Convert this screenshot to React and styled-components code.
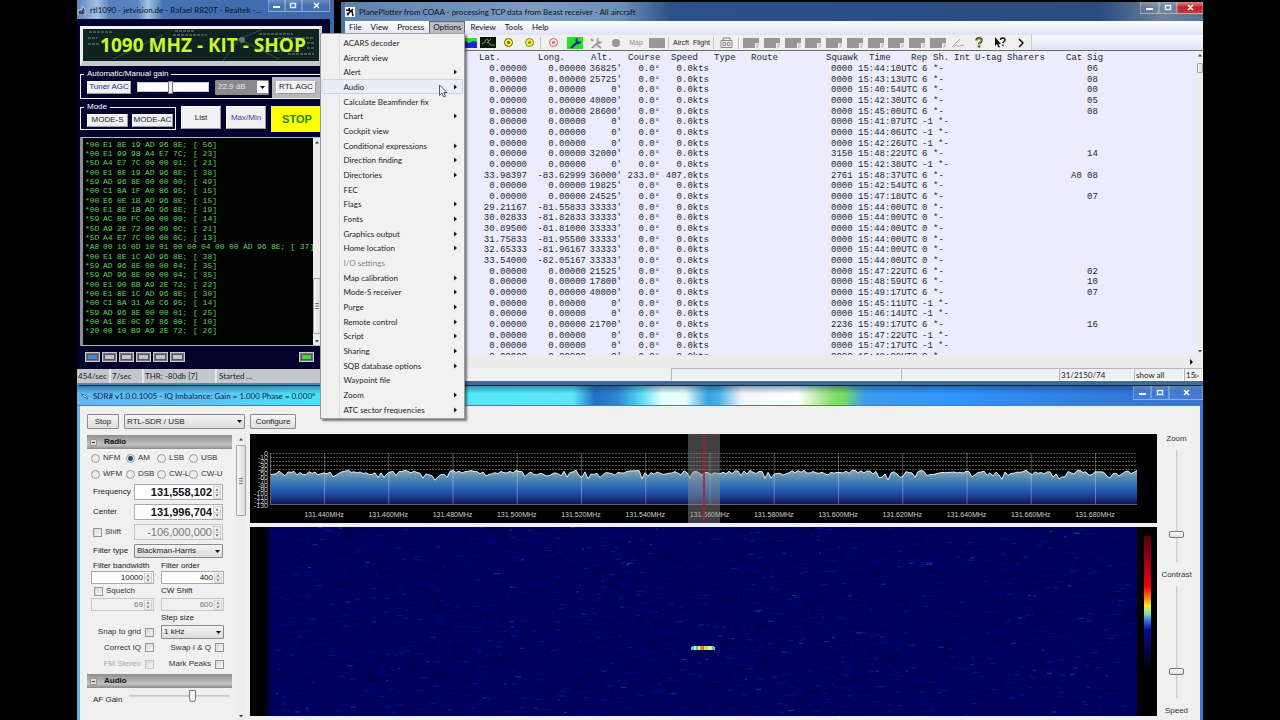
import * as React from "react"
import styled, { createGlobalStyle, css } from "styled-components";

const GlobalStyle = createGlobalStyle`
  * { box-sizing: border-box; }
  body { margin: 0; background: #000; }
  button, input, select { font: inherit; color: inherit; margin: 0; }
  ul { list-style: none; margin: 0; padding: 0; }
`
const ui = `"Lato", "Open Sans", sans-serif`
const sans = `"Liberation Sans", Arial, sans-serif`
const mono = `"Liberation Mono", "Courier New", monospace`

/* ---------- data ---------- */

const packets = [
  "00 E1 8E 19 AD 96 8E;56", "00 E1 99 98 A4 E7 7C;23", "5D A4 E7 7C 00 00 01;21",
  "00 E1 8E 19 AD 96 8E;38", "59 AD 96 8E 00 00 00;49", "00 C1 8A 1F A0 86 95;15",
  "00 E6 0E 1B AD 96 8E;15", "00 E1 8E 1B AD 96 8E;19", "59 AC B0 FC 00 00 00;14",
  "5D A9 2E 72 00 00 0C;21", "5D A4 E7 7C 00 00 0C;13",
  "A8 00 16 0D 10 01 00 00 04 00 00 AD 96 8E;37", "00 E1 8E 1C AD 96 8E;38",
  "59 AD 96 8E 00 00 04;35", "59 AD 96 8E 00 00 04;35", "00 E1 90 BB A9 2E 72;22",
  "00 E1 8E 1C AD 96 8E;30", "00 C1 8A 31 A0 C6 95;14", "59 AD 96 8E 00 00 01;25",
  "00 A1 8E 0C 67 86 00;10", "20 00 10 B9 A9 2E 72;26",
]

const zero = "0.00000"
const row = (alt, time, rep, sig = "", more = {}) => ({
  lat: zero, long: zero, alt, course: "0.0", speed: "0.0", squawk: "0000", cat: "", time, rep, sig, ...more,
})
const aircraft = [
  row("36825", "15:44:10", "6", "06"),
  row("25725", "15:43:13", "6", "08"),
  row("0", "15:40:54", "6", "00"),
  row("40000", "15:42:30", "6", "05"),
  row("28600", "15:45:00", "6", "08"),
  row("0", "15:41:07", "-1"),
  row("0", "15:44:06", "-1"),
  row("0", "15:42:26", "-1"),
  row("32000", "15:48:22", "6", "14", { squawk: "3150" }),
  row("0", "15:42:38", "-1"),
  row("36000", "15:48:37", "6", "08", { lat: "33.98397", long: "-83.62999", course: "233.0", speed: "407.0", squawk: "2761", cat: "A0" }),
  row("19825", "15:42:54", "6"),
  row("24525", "15:47:18", "6", "07"),
  row("33333", "15:44:00", "0", "", { lat: "29.21167", long: "-81.55833" }),
  row("33333", "15:44:00", "0", "", { lat: "30.02833", long: "-81.82833" }),
  row("33333", "15:44:00", "0", "", { lat: "30.89500", long: "-81.81000" }),
  row("33333", "15:44:00", "0", "", { lat: "31.75833", long: "-81.95500" }),
  row("33333", "15:44:00", "0", "", { lat: "32.65333", long: "-81.96167" }),
  row("33333", "15:44:00", "0", "", { lat: "33.54000", long: "-82.05167" }),
  row("21525", "15:47:22", "6", "02"),
  row("17800", "15:48:59", "6", "10"),
  row("40000", "15:49:17", "6", "07"),
  row("0", "15:45:11", "-1"),
  row("0", "15:46:14", "-1"),
  row("21700", "15:49:17", "6", "16", { squawk: "2236" }),
  row("0", "15:47:22", "-1"),
  row("0", "15:47:17", "-1"),
  row("0", "15:48:08", "0"),
]

const menuItems = [
  ["ACARS decoder"], ["Aircraft view"], ["Alert", 1], ["Audio", 1], ["Calculate Beamfinder fix"],
  ["Chart", 1], ["Cockpit view"], ["Conditional expressions", 1], ["Direction finding", 1],
  ["Directories", 1], ["FEC"], ["Flags", 1], ["Fonts", 1], ["Graphics output", 1],
  ["Home location", 1], ["I/O settings"], ["Map calibration", 1], ["Mode-S receiver", 1],
  ["Purge", 1], ["Remote control", 1], ["Script", 1], ["Sharing", 1],
  ["SQB database options", 1], ["Waypoint file"], ["Zoom", 1], ["ATC sector frequencies", 1],
]

/* ---------- shell ---------- */

const Desktop = styled.main`
  min-height: 100vh;
  margin: 0 77px;
  display: grid;
  grid-template-rows: auto 1fr;
  font: 8px/10px ${ui};
  color: #222;
  background: #000;
`
const TopRow = styled.div`
  display: grid;
  grid-template-columns: 257px 1fr;
  gap: 7px;
  position: relative;
  z-index: 1;
`
const Spacer = styled.span`
  flex: 1;
`
const TitleText = styled.span`
  white-space: nowrap;
`

/* ---------- caption buttons ---------- */

const Caption = styled.div`
  display: flex;
  flex: none;
  align-self: flex-start;
  margin-left: auto;
`
const CaptionButton = styled.button`
  width: ${p => p.$w || 18}px;
  height: ${p => p.$h || 12}px;
  padding: 0;
  border: 1px solid rgba(255, 255, 255, 0.25);
  border-top: 0;
  display: grid;
  place-items: center;
  background: ${p => p.$close ? "linear-gradient(#d98a86, #b5242a 50%, #c8383c)" : "linear-gradient(rgba(255,255,255,.25), rgba(255,255,255,.05) 50%)"};
  svg { display: block; }
`
const captionGlyphs = {
  Minimize: <rect x="1" y="4" width="7" height="2" fill="#fff" />,
  Maximize: <path d="M1.500 1.500h5v4h-5z" stroke="#e4ecf6" strokeWidth="1.500" fill="none" />,
  Close: <path d="M2 1l5 5M7 1L2 6" stroke="#fff" strokeWidth="1.500" />,
}
const CaptionButtons = ({ widths, height, redClose }) => (
  <Caption>
    {Object.keys(captionGlyphs).map((name, i) => (
      <CaptionButton key={name} aria-label={name} $w={widths[i]} $h={height} $close={redClose && i === 2}>
        <svg width="9" height="8">{captionGlyphs[name]}</svg>
      </CaptionButton>
    ))}
  </Caption>
)

/* ---------- rtl1090 ---------- */

const RtlWindow = styled.section`
  display: flex;
  flex-direction: column;
  min-width: 0;
  background: #02022c;
  border-right: 4px solid #3d68ac;
  border-bottom: 2px solid #3f8fc8;
`
const RtlTitle = styled.header`
  height: 19px;
  display: flex;
  align-items: center;
  gap: 3px;
  background: linear-gradient(90deg, #5d86c2, #a3c0e2 8%, #5480bf 13%, #5a86c4 24%, #a9c4e6 28%, #4673b4 34%, #3a66ab);
  color: #0a0f20;
  svg { display: block; flex: none; }
`
const RtlBody = styled.div`
  flex: 1;
  padding: 7px 8px 0 3px;
  display: flex;
  flex-direction: column;
`
const Banner = styled.h1`
  margin: 0;
  height: 40px;
  border: 3px solid #eef0f4;
  border-bottom-color: #c6c8cc;
  border-right-color: #c6c8cc;
  border-bottom-width: 5px;
  display: grid;
  overflow: hidden;
  background: #10231f;
  svg, span { grid-area: 1 / 1; }
  span {
    place-self: center;
    font: 700 19px/30px "Open Sans", sans-serif;
    color: #c9f72e;
    white-space: nowrap;
  }
`
const Row = styled.div`
  display: flex;
  align-items: flex-start;
  gap: 5px;
  & > button { margin-top: 7px; }
`
const RtlGroup = styled.fieldset`
  margin: 4px 0 0;
  height: ${p => p.$h}px;
  min-width: 0;
  flex: none;
  padding: 1px ${p => p.$wide ? 0 : 2}px 0 6px;
  border: 1px solid #f2f2f6;
  font: 8px/8px ${sans};
  color: #fff;
  legend {
    margin-left: -3px;
    padding: 0 3px;
  }
`
const GroupRow = styled.div`
  display: flex;
  align-items: center;
  gap: ${p => p.$gap}px;
  height: 16px;
`
const RtlButton = styled.button`
  flex: none;
  width: ${p => p.$w}px;
  height: ${p => p.$h || 13}px;
  padding: 0;
  border: 1px solid #fff;
  border-right-color: #9a9aa0;
  border-bottom-color: #9a9aa0;
  background: #f0f0f2;
  color: ${p => p.$ink || "#222"};
  font: 8px/8px ${sans};
  white-space: nowrap;
  ${p => p.$stop && css`
    background: #ffff00;
    border-color: #e8e8a0;
    color: #178a17;
    font: 700 11px/12px ${sans};
  `}
`
const AgcFrame = styled.div`
  background: #b9b9bd;
  padding: 4px;
  margin-left: -3px;
`
const GainRange = styled.input`
  appearance: none;
  width: 72px;
  height: 10px;
  background: #fff;
  border: 1px solid #c8c8d0;
  &::-webkit-slider-thumb {
    appearance: none;
    width: 5px;
    height: 13px;
    background: #f2f2f2;
    border: 1px solid #777;
  }
`
const SelectBox = styled.span`
  display: inline-grid;
  width: ${p => p.$w};
  min-width: 0;
  select, svg { grid-area: 1 / 1; }
  select {
    appearance: none;
    width: 100%;
    height: ${p => p.$h}px;
    padding: 0 2px;
    border: 1px solid #8a8a8a;
    border-radius: 1px;
    background: ${p => p.$bg || "linear-gradient(#f4f4f4, #dcdcdc)"};
    color: ${p => p.$ink || "#222"};
    font: 8px/10px ${sans};
  }
  svg {
    place-self: center end;
    margin-right: ${p => p.$arrowBg ? 1 : 3}px;
    pointer-events: none;
    background: ${p => p.$arrowBg || "none"};
  }
`
const Select = ({ label, value, ...box }) => (
  <SelectBox {...box}>
    <select aria-label={label} defaultValue={value}><option>{value}</option></select>
    {box.$arrowBg
      ? <svg width="11" height="12"><path d="M3 5h5l-2.500 3z" fill="#000" /></svg>
      : <svg width="5" height="3"><path d="M0 0h5l-2.500 3z" fill="#111" /></svg>}
  </SelectBox>
)
const Terminal = styled.div`
  margin-top: 5px;
  height: 209px;
  display: flex;
  border: 1px solid #b8b8c0;
  border-left: 3px solid #8d8d98;
  background: #000401;
  overflow: hidden;
`
const PacketList = styled.ul`
  flex: 1;
  min-width: 0;
  padding: 2px 0 0 2px;
  font: 8px/9px ${mono};
  color: #60cc62;
  li {
    display: flex;
    white-space: pre;
    line-height: 9px;
  }
  li:nth-child(3n) { line-height: 10px; }
`
const Byte = styled.span`
  width: ${p => p.$first ? 18 : p.$last ? 20 : 14}px;
`
const Packet = ({ text }) => {
  const [hex, level] = text.split(";")
  const bytes = hex.split(" ")
  return (
    <li>
      {bytes.map((b, i) => (
        <Byte key={i} $first={i === 0} $last={i === bytes.length - 1}>
          {i === 0 ? "*" : ""}{b}{i === bytes.length - 1 ? "; " : " "}
        </Byte>
      ))}
      {"[ " + level + "]"}
    </li>
  )
}
const ScrollTrack = styled.div`
  flex: none;
  width: ${p => p.$w}px;
  background: #ededed;
  display: flex;
  flex-direction: column;
  align-items: center;
  justify-content: space-between;
  svg { display: block; flex: none; }
`
const ScrollThumb = styled.div`
  width: 100%;
  height: ${p => p.$h}px;
  margin: ${p => p.$m || "0"};
  border: 1px solid #a5a5a5;
  border-radius: 1px;
  background: linear-gradient(90deg, #f8f8f8, #dadada);
  display: grid;
  place-items: center;
`
const Grip = () => (
  <svg width="4" height="6"><path d="M0 .5h4M0 3h4M0 5.500h4" stroke="#777" /></svg>
)
const Arrow = ({ up }) => (
  <svg width="6" height="8"><path d={up ? "M1 5.500l2-2.500 2 2.500z" : "M1 3l2 2.500L5 3z"} fill="#444" /></svg>
)
const Leds = styled.div`
  display: flex;
  gap: 2px;
  padding: 6px 8px 0 5px;
`
const Led = styled.span`
  width: 15px;
  height: 10px;
  border: 1px solid #c9c9cd;
  outline: 1px solid #55555c;
  outline-offset: -3px;
  background: ${p => p.$c || "#c4c4c8"};
  box-shadow: inset 0 0 0 2px #77777e;
`
const RtlStatus = styled.footer`
  height: 14px;
  display: flex;
  background: #c6c6c8;
  color: #222;
  line-height: 14px;
  span {
    padding-left: 1px;
    border-right: 2px solid #e6e6e6;
  }
  span:last-child { border: 0; padding-left: 2px; }
`
const StatusCell = styled.span`
  width: ${p => p.$w}px;
`

const RtlApp = () => (
  <RtlWindow>
    <RtlTitle>
      <svg width="10" height="10"><path d="M1 5h4V1l3 3v6H1z" fill="#3c4a66" stroke="#c9d6ea" /></svg>
      <TitleText>rtl1090 - jetvision.de - Rafael R820T - Realtek -...</TitleText>
      <CaptionButtons widths={[17, 17, 28]} height={12} />
    </RtlTitle>
    <RtlBody>
      <Banner>
        <svg width="240" height="32">
          <path d="M6 3h24M5 9h9M5 15h12M92 2h20M90 6h34M176 5h34M195 9h36M182 22h30M205 25h26M224 14h8M224 19h8" stroke="#3f5a55" strokeWidth="2" strokeDasharray="3 1" />
          <path d="M140 32l16-22 22-9M156 10l40 20M30 30l50-24" stroke="#33504b" fill="none" />
          <circle cx="159" cy="11" r="3" fill="#5c7a75" />
        </svg>
        <span>1090 MHZ - KIT - SHOP</span>
      </Banner>
      <RtlGroup $h={29} $wide>
        <legend>Automatic/Manual gain</legend>
        <GroupRow $gap={6}>
          <RtlButton $w={44} $ink="#2a2a86">Tuner AGC</RtlButton>
          <GainRange type="range" aria-label="Manual gain" min="0" max="100" defaultValue="46" />
          <Select label="Gain" value="22.9 dB" $w="54px" $h={15} $bg="#8b8b8f" $ink="#e6e6e6" $arrowBg="#fff" />
          <AgcFrame><RtlButton $w={40}>RTL AGC</RtlButton></AgcFrame>
        </GroupRow>
      </RtlGroup>
      <Row>
        <RtlGroup $h={27}>
          <legend>Mode</legend>
          <GroupRow $gap={4}>
            <RtlButton $w={41}>MODE-S</RtlButton>
            <RtlButton $w={41}>MODE-AC</RtlButton>
          </GroupRow>
        </RtlGroup>
        <RtlButton $w={40} $h={23}>List</RtlButton>
        <RtlButton $w={40} $h={23} $ink="#4338a8">Max/Min</RtlButton>
        <RtlButton $w={52} $h={26} $stop>STOP</RtlButton>
      </Row>
      <Terminal>
        <PacketList>{packets.map((p, i) => <Packet key={i} text={p} />)}</PacketList>
        <ScrollTrack $w={8}>
          <Arrow up />
          <ScrollThumb $h={56} $m="128px 0 0"><Grip /></ScrollThumb>
          <Arrow />
        </ScrollTrack>
      </Terminal>
      <Leds>
        <Led $c="#4d86e0" /><Led /><Led /><Led /><Led /><Led />
        <Spacer />
        <Led $c="#33e033" />
      </Leds>
    </RtlBody>
    <RtlStatus>
      <StatusCell $w={34}>454/sec</StatusCell>
      <StatusCell $w={33}>7/sec</StatusCell>
      <StatusCell $w={73}>THR: -80db [7]</StatusCell>
      <span>Started ...</span>
    </RtlStatus>
  </RtlWindow>
)

/* ---------- PlanePlotter ---------- */

const PlotterWindow = styled.section`
  min-width: 0;
  margin-top: 2px;
  display: flex;
  flex-direction: column;
  border-left: 4px solid #4a74a8;
  border-bottom: 4px solid #3d6c9c;
  background: #f0f0f0;
`
const PlotterTitle = styled.header`
  height: 19px;
  display: flex;
  align-items: center;
  gap: 4px;
  background: linear-gradient(90deg, #5f82ae, #7d9cc2 22%, #6d90ba 32%, #2b5189 38%, #294c82 88%, #6e8097 95%, #54749c);
  color: #0c1424;
  svg { display: block; }
`
const MenuBar = styled.nav`
  height: 14px;
  background: linear-gradient(#fdfdff, #dfe2f4);
  ul { display: flex; gap: 1px; }
`
const MenuBarItem = styled.li`
  position: relative;
  & > button {
    height: 13px;
    padding: 0 4px;
    border: 0;
    background: none;
    line-height: 13px;
    color: #111;
    ${p => p.$open && css`
      padding: 0 3px;
      border: 1px solid #66666e;
      line-height: 11px;
      background: #bcbcc6;
    `}
  }
`
const DropDown = styled.ul`
  && { display: block; }
  position: absolute;
  top: 12px;
  right: 0;
  width: 145px;
  padding: 1px;
  border: 1px solid #9c9c9c;
  box-shadow: 2px 2px 2px rgba(0, 0, 0, 0.5);
  background: linear-gradient(90deg, #f0f0f0 18px, #dedede 18px, #dedede 19px, #f1f1f1 19px);
  li:nth-child(3n) button { height: 14px; }
`
const MenuButton = styled.button`
  width: 100%;
  height: 15px;
  padding: 0 5px 0 20px;
  border: 1px solid transparent;
  border-radius: 1px;
  display: flex;
  align-items: center;
  justify-content: space-between;
  background: none;
  line-height: 10px;
  color: #1c1c1c;
  text-align: left;
  &:disabled { color: #858585; }
  ${p => p.$active && css`
    border-color: #c4d6ee;
    background: #e9eef6;
  `}
`
const Pointer = styled.li`
  position: absolute;
  left: 117px;
  top: 50px;
`
const ToolBar = styled.div`
  height: 16px;
  padding-left: 119px;
  display: flex;
  align-items: center;
  border-bottom: 1px solid #6a6a72;
  background: #f0f0f0;
`
const Tool = styled.button`
  flex: none;
  width: ${p => p.$w || 21}px;
  height: 14px;
  padding: 0;
  border: 0;
  background: none;
  display: grid;
  place-items: center;
  font: 7px/10px ${sans};
  color: ${p => p.$ink || "#222"};
  svg { display: block; }
`
const Presets = styled.div`
  width: 207px;
  display: grid;
  grid-template-columns: repeat(10, 1fr);
  button { width: auto; }
`
const Divider = styled.span`
  width: 1px;
  height: 12px;
  margin: 0 ${p => p.$r}px 0 ${p => p.$l}px;
  background: #c4c4c8;
`
const ToolBarEnd = styled.span`
  flex: 1;
  align-self: stretch;
  border-left: 1px solid #c9c9d2;
  background: linear-gradient(#fafaff, #dfe2f2);
`
const ListPane = styled.div`
  height: 304px;
  display: flex;
  background: #ececfd;
`
const ListClip = styled.div`
  flex: 1;
  min-width: 0;
  overflow: hidden;
`
const AircraftTable = styled.table`
  width: 100%;
  table-layout: fixed;
  border-collapse: collapse;
  font: 9px/10px ${mono};
  color: #26262c;
  th, td {
    padding: 0;
    height: 11px;
    font-weight: 400;
    text-align: left;
    white-space: pre;
  }
  thead th {
    height: 12px;
    padding-top: 2px;
  }
  tr:nth-child(3n) td { height: 10px; }
`
const Cell = styled.td`
  && {
    text-align: ${p => p.$right ? "right" : "left"};
    padding-left: ${p => p.$pad || 0}px;
  }
`
const columns = [
  { w: 129 },
  { name: "Lat.", w: 53, pad: 5 },
  { name: "Long.", w: 59, pad: 11 },
  { name: "Alt.", w: 36, pad: 5 },
  { name: "Course", w: 38, pad: 6 },
  { name: "Speed", w: 49, pad: 11 },
  { name: "Type", w: 37, pad: 5 },
  { name: "Route", w: 75, pad: 5 },
  { name: "Squawk", w: 37, pad: 5 },
  { name: "Time", w: 53, pad: 11 },
  { name: "Rep", w: 22, pad: 0 },
  { name: "Sh.", w: 21, pad: 0 },
  { name: "Int", w: 21, pad: 0 },
  { name: "U-tag", w: 32, pad: 0 },
  { name: "Sharers", w: 59, pad: 0 },
  { name: "Cat", w: 21, pad: 0 },
  { name: "Sig" },
]
const HScroll = styled.div`
  flex: 1;
  min-height: 13px;
  display: flex;
  align-items: center;
  justify-content: flex-end;
  padding-right: 10px;
  background: #ececec;
`
const PlotterStatus = styled.footer`
  height: 13px;
  display: flex;
  justify-content: flex-end;
  background: #f0f0f0;
  line-height: 12px;
  span {
    border: 1px solid #b4b4b4;
    border-right-color: #fff;
    border-bottom-color: #fff;
    padding-left: 1px;
  }
`

const target = (color, fill) => (
  <svg width="11" height="11">
    <circle cx="5.500" cy="5.500" r="4" fill={fill} stroke={color} />
    <circle cx="5.500" cy="5.500" r="1.500" fill={color} />
  </svg>
)
const wrench = color => (
  <path d="M2 10.500L8 5a3 3 0 0 1 1-4l1 0-1 2 2 2 2-1a3 3 0 0 1-4 3L4 11.500z" fill={color} />
)

const OptionsMenu = () => (
  <DropDown role="menu">
    {menuItems.map(([name, sub]) => (
      <li key={name}>
        <MenuButton role="menuitem" $active={name === "Audio"} disabled={name === "I/O settings"}>
          {name}
          {sub && <svg width="3" height="6"><path d="M0 .5L3 3 0 5.500z" fill="#111" /></svg>}
        </MenuButton>
      </li>
    ))}
    <Pointer role="none">
      <svg width="10" height="14"><path d="M1.500 1v10.500l2.500-2.300 1.800 3.800 1.700-.8L5.800 8.500H9z" fill="#fff" stroke="#555" /></svg>
    </Pointer>
  </DropDown>
)

const PlotterToolBar = () => (
  <ToolBar>
    <Tool aria-label="Map" $w={13}>
      <svg width="12" height="12"><path d="M0 1h12v10H0z" fill="#2ee02e" /><path d="M0 4l4 2 4-2 4 1v6H0z" fill="#1824d8" /></svg>
    </Tool>
    <Tool aria-label="Signal view">
      <svg width="16" height="11"><path d="M0 0h16v11H0z" fill="#0a120a" /><path d="M2 7c3 0 3-5 5-5s1 6 4 6h4M7 6l4-4" stroke="#46b446" fill="none" /></svg>
    </Tool>
    <Tool aria-label="Start">{target("#6a6210", "#f6f04a")}</Tool>
    <Tool aria-label="Stop">{target("#8d801a", "#f6f04a")}</Tool>
    <Divider $l={0} $r={2} />
    <Tool aria-label="Record">{target("#d4596b", "#fde8ea")}</Tool>
    <Tool aria-label="Settings">
      <svg width="16" height="12"><path d="M0 0h16v12H0z" fill="#22e422" /><g transform="translate(1 0)">{wrench("#1018a0")}</g></svg>
    </Tool>
    <Tool aria-label="I/O settings">
      <svg width="14" height="12">{wrench("#9b9b9b")}<path d="M2 2l2 2M8 8l4 3" stroke="#9b9b9b" strokeWidth="2" /></svg>
    </Tool>
    <Tool aria-label="Mark" $w={20}><svg width="8" height="8"><circle cx="4" cy="4" r="4" fill="#949494" /></svg></Tool>
    <Tool $w={20} $ink="#8c8c8c">Map</Tool>
    <Tool aria-label="Chart"><svg width="16" height="10"><path d="M0 0h16v10H0z" fill="#999" /></svg></Tool>
    <Divider $l={1} $r={2} />
    <Tool $w={20}>Aircft</Tool>
    <Tool>Flight</Tool>
    <Divider $l={1} $r={2} />
    <Tool aria-label="Find">
      <svg width="13" height="11"><path d="M3 3V1h7v2M1 3.500h11v7H1z" fill="none" stroke="#8a8a8a" /><path d="M3 5.500h2.500v3H3zM7.500 5.500H10v3H7.500z" fill="none" stroke="#8a8a8a" /></svg>
    </Tool>
    <Divider $l={1} $r={2} />
    <Presets>
      {Array.from({ length: 10 }, (_, i) => (
        <Tool key={i} aria-label={`Preset ${i + 1}`}>
          <svg width="16" height="10"><path d="M0 0h16v5h-4v5H0z" fill="#969696" /><path d="M13 6h2v3h-2" stroke="#b4b4b4" fill="none" /></svg>
        </Tool>
      ))}
    </Presets>
    <Tool aria-label="Draw" $w={20}>
      <svg width="14" height="10"><path d="M1 9L9 1M3 9c3-4 4 1 6-1s2 0 4-1" stroke="#a4a4a4" fill="none" /></svg>
    </Tool>
    <Tool aria-label="Help">
      <svg width="8" height="11"><path d="M1.500 3.500c0-3 5-3 5 0 0 2-2.500 2-2.500 4M4 8.500v2" stroke="#4c4c10" strokeWidth="2.500" fill="none" /><path d="M2 3.500c0-2 4-2 4 0 0 2-2 2-2 3.500" stroke="#d6dc58" fill="none" /></svg>
    </Tool>
    <Tool aria-label="Context help">
      <svg width="12" height="11"><path d="M1 0v9l2-2 1.500 3.500L6 10 4.500 7H7z" fill="#111" /><path d="M6.500 3c0-3 4.500-2.500 4.500 0 0 1.500-2 1.500-2 3M9 7.500V9" stroke="#111" strokeWidth="1.500" fill="none" /></svg>
    </Tool>
    <Tool aria-label="More">
      <svg width="8" height="10"><path d="M2 1l4 4-4 4" stroke="#111" strokeWidth="1.500" fill="none" /></svg>
    </Tool>
    <ToolBarEnd />
  </ToolBar>
)

const AircraftList = () => (
  <AircraftTable>
    <colgroup>
      {columns.map((c, i) => <col key={i} width={c.w} />)}
    </colgroup>
    <thead>
      <tr>
        {columns.map((c, i) => <Cell as="th" key={i} $pad={c.pad}>{c.name}</Cell>)}
      </tr>
    </thead>
    <tbody>
      {aircraft.map((a, i) => (
        <tr key={i}>
          <Cell />
          <Cell $right>{a.lat}</Cell>
          <Cell $right>{a.long}</Cell>
          <Cell $right>{a.alt}'</Cell>
          <Cell $right>{a.course}°</Cell>
          <Cell $right>{a.speed}kts</Cell>
          <Cell />
          <Cell />
          <Cell $pad={10}>{a.squawk}</Cell>
          <Cell>{a.time}UTC</Cell>
          <Cell $pad={11}>{a.rep}</Cell>
          <Cell $pad={a.rep === "-1" ? 5 : 0}>*-</Cell>
          <Cell />
          <Cell />
          <Cell />
          <Cell $pad={5}>{a.cat}</Cell>
          <Cell>{a.sig}</Cell>
        </tr>
      ))}
    </tbody>
  </AircraftTable>
)

const PlotterApp = () => (
  <PlotterWindow>
    <PlotterTitle>
      <svg width="10" height="10"><path d="M0 0h10v10H0z" fill="#fff" /><path d="M2 8l6-6M1 3l6 1 1 5M4 1l1 4M2 6l2 2" stroke="#111" strokeWidth="1.500" fill="none" /></svg>
      <TitleText>PlanePlotter from COAA - processing TCP data from Beast receiver - All aircraft</TitleText>
      <CaptionButtons widths={[19, 18, 26]} height={12} redClose />
    </PlotterTitle>
    <MenuBar>
      <ul>
        {["File", "View", "Process", "Options", "Review", "Tools", "Help"].map(name => (
          <MenuBarItem key={name} $open={name === "Options"}>
            <button>{name}</button>
            {name === "Options" && <OptionsMenu />}
          </MenuBarItem>
        ))}
      </ul>
    </MenuBar>
    <PlotterToolBar />
    <ListPane>
      <ListClip><AircraftList /></ListClip>
      <ScrollTrack $w={6}>
        <Arrow up />
        <ScrollThumb $h={10} $m="4px 0 auto" />
        <Arrow />
      </ScrollTrack>
    </ListPane>
    <HScroll><svg width="3" height="6"><path d="M0 0l3 3-3 3z" fill="#111" /></svg></HScroll>
    <PlotterStatus>
      <StatusCell $w={230} />
      <StatusCell $w={158} />
      <StatusCell $w={75}>31/2150/74</StatusCell>
      <StatusCell $w={50}>show all</StatusCell>
      <StatusCell $w={19}>15▹</StatusCell>
    </PlotterStatus>
  </PlotterWindow>
)

/* ---------- SDR# ---------- */

const SdrWindow = styled.section`
  display: flex;
  flex-direction: column;
  min-width: 0;
  border-top: 1px solid #10243c;
  border-left: 3px solid #62b4e4;
  border-right: 3px solid #3a78d4;
  background: #f0f0f0;
  font: 8px/10px ${sans};
`
const SdrTitle = styled.header`
  height: 20px;
  margin: 0 -3px;
  padding-left: 4px;
  display: flex;
  align-items: center;
  gap: 5px;
  border-bottom: 1px solid #4880b0;
  background:
    linear-gradient(rgba(10, 50, 90, 0.45), transparent 40%),
    linear-gradient(90deg, #64b6f0, #5cc4f4 12%, #48e4fa 21%, #5ce8fa 44%, #2070c4 46%, #2e86d0 48%, #50d8f4 50%, #e8ffff 52%, #e8ffff 54%, #38a4e0 56%, #48b0e8 57%, #f4f4fa 59%, #fff 64%, #8ce070 67%, #76dc60 68%, #3c9cf0 70%, #2f94ff 78%, #3478d8 92%, #3a74d0);
  font: 8px/10px ${ui};
  color: #0c2238;
`
const SdrBody = styled.div`
  flex: 1;
  padding: 8px 0 0 7px;
  display: flex;
  flex-direction: column;
`
const SdrTools = styled.div`
  height: 21px;
  display: flex;
  align-items: flex-start;
  gap: 5px;
`
const SdrButton = styled.button`
  width: ${p => p.$w}px;
  height: 15px;
  padding: 0;
  border: 1px solid #8c8c8c;
  border-radius: 1px;
  background: linear-gradient(#f6f6f6, #dedede);
  line-height: 12px;
`
const SdrMain = styled.div`
  flex: 1;
  display: flex;
  gap: 4px;
`
const Panel = styled.div`
  width: 145px;
`
const PanelHeader = styled.h2`
  margin: 0;
  height: 14px;
  padding-left: 3px;
  display: flex;
  align-items: center;
  gap: 7px;
  background: linear-gradient(#8e8e8e, #c4c4c4 70%, #8a8a8a);
  font: 700 8px/12px ${sans};
  color: #111;
  svg { display: block; }
`
const RadioGrid = styled.div`
  padding: 1px 0 0 4px;
  display: grid;
  grid-template-columns: 35px 31px 32px 40px;
  grid-auto-rows: 16px;
`
const Label = styled.label`
  display: flex;
  align-items: center;
  gap: ${p => p.$gap || 3}px;
  white-space: nowrap;
  color: ${p => p.$off ? "#a8a8a8" : "#333"};
  justify-content: ${p => p.$end ? "flex-end" : "flex-start"};
`
const Radio = styled.input`
  appearance: none;
  flex: none;
  width: 9px;
  height: 9px;
  border: 1px solid #9a9a9a;
  border-radius: 50%;
  background: #ececec;
  &:checked { background: radial-gradient(circle, #1c4f74 0 2px, #e8eef2 3px); }
`
const Check = styled.input`
  appearance: none;
  flex: none;
  width: 9px;
  height: 9px;
  border: 1px solid ${p => p.disabled ? "#c8c8c8" : "#949494"};
  background: linear-gradient(135deg, #d6d6d6, #f8f8f8);
`
const Form = styled.div`
  padding: 0 0 2px 4px;
`
const FieldRow = styled.div`
  height: ${p => p.$h}px;
  padding-left: 2px;
  display: grid;
  grid-template-columns: 41px 89px;
  align-items: center;
`
const PairRow = styled.div`
  height: ${p => p.$h}px;
  padding-left: ${p => p.$pad || 0}px;
  display: grid;
  grid-template-columns: ${p => 63 - (p.$pad || 0)}px 63px;
  column-gap: 7px;
  align-items: center;
`
const SpinBox = styled.span`
  display: flex;
  align-items: center;
  height: ${p => p.$h}px;
  border: 1px solid ${p => p.$off ? "#c4c4c4" : "#aaa"};
  background: ${p => p.$off ? "#f0f0f0" : "#fff"};
  input {
    flex: 1;
    min-width: 0;
    width: 0;
    padding: 0;
    border: 0;
    background: none;
    text-align: right;
    color: ${p => p.$off ? "#777" : "#111"};
    font: ${p => p.$size === "big" ? `${p.$off ? 400 : 700} 11px/14px` : "8px/10px"} ${sans};
  }
  svg { flex: none; display: block; margin: 0 1px; }
`
const Spin = ({ label, value, h, big, off }) => (
  <SpinBox $h={h} $off={off} $size={big && "big"}>
    <input type="text" aria-label={label} defaultValue={value} disabled={off} />
    <svg width="8" height={h - 3} viewBox="0 0 8 12" preserveAspectRatio="none">
      <path d="M.5.5h7v11h-7zM.5 6h7" fill="#f2f2f2" stroke="#ccc" />
      <path d="M2.500 4.200L4 2.200l1.500 2zM2.500 7.800L4 9.800l1.500-2z" fill="#555" />
    </svg>
  </SpinBox>
)
const GainRow = styled.div`
  height: 22px;
  padding: 0 2px 0 6px;
  display: grid;
  grid-template-columns: 36px 1fr;
  align-items: center;
  label { padding-top: 2px; }
`
const AfRange = styled.input`
  appearance: none;
  width: 100%;
  height: 12px;
  margin-bottom: 6px;
  background: linear-gradient(transparent 5px, #c4c4c4 5px, #d8d8d8 7px, transparent 7px);
  &::-webkit-slider-thumb {
    appearance: none;
    width: 7px;
    height: 12px;
    border: 1px solid #777;
    border-radius: 1px 1px 4px 4px;
    background: #f4f4f4;
  }
`
const Scopes = styled.div`
  flex: 1;
  min-width: 0;
  display: flex;
  flex-direction: column;
  gap: 4px;
  margin: -1px 0 4px;
  svg { display: block; width: 100%; }
`
const ScopeColumn = styled.div`
  width: 39px;
  margin-top: -1px;
  padding-right: 8px;
  display: flex;
  flex-direction: column;
  align-items: center;
  color: #333;
`
const SliderLabel = styled.label`
  line-height: 10px;
  margin-bottom: ${p => p.$last ? 0 : 6}px;
`
const VRange = styled.input`
  appearance: none;
  writing-mode: vertical-lr;
  direction: rtl;
  width: 16px;
  height: 112px;
  margin: 0 0 8px;
  background: linear-gradient(90deg, transparent 7px, #c8c8c8 7px, #e8e8e8 9px, transparent 9px);
  &::-webkit-slider-thumb {
    appearance: none;
    width: 15px;
    height: 7px;
    border: 1px solid #777;
    border-radius: 2px;
    background: linear-gradient(#fff, #dcdcdc);
  }
`

// small seeded generator so the noise is the same on every load
const seeded = seed => () => {
  seed = (seed * 1664525 + 1013904223) % 4294967296
  return seed / 4294967296
}

const tracePoints = (() => {
  const rnd = seeded(7)
  const pts = []
  for (let x = 20; x <= 887; x += 3) {
    const dip = rnd() > 0.8 ? 2 + rnd() * 4 : 0
    pts.push([x, 37 + rnd() * 3 + Math.sin(x / 9) + dip])
  }
  return pts.map(([x, y]) => `${x} ${y.toFixed(1)}`).join("L")
})()

const speckles = (seed, count, maxLen) => {
  const rnd = seeded(seed)
  let d = ""
  for (let i = 0; i < count; i++) {
    const x = 20 + rnd() * 858
    const y = rnd() * 188
    d += `M${x.toFixed(0)} ${y.toFixed(1)}l${(2 + rnd() * maxLen).toFixed(0)} ${(rnd() - 0.5).toFixed(1)}`
  }
  return d
}

const freqs = Array.from({ length: 13 }, (_, i) => 131.44 + i * 0.02)
const hitColors = ["#4cc4d8", "#c8f0a0", "#58c8c0", "#f0ec60", "#f09030", "#f07828", "#f4d850", "#a0e890", "#f4f070", "#d8f090", "#50c0d0"]

const Spectrum = () => (
  <svg viewBox="0 0 907 89" role="img" aria-label="Spectrum">
    <defs>
      <linearGradient id="spec" x1="0" y1="0" x2="0" y2="1">
        <stop offset="0" stopColor="#8fa8b0" />
        <stop offset=".25" stopColor="#5088b4" />
        <stop offset=".55" stopColor="#2560b4" />
        <stop offset=".8" stopColor="#1c3c8c" />
        <stop offset="1" stopColor="#141450" />
      </linearGradient>
    </defs>
    <rect width="907" height="89" fill="#000" />
    {Array.from({ length: 5 }, (_, i) => (
      <path key={i} d={`M20 ${19.5 + i * 4}H887`} stroke="#505050" strokeDasharray="2 1" />
    ))}
    <path d={`M20 70L${tracePoints}L887 70z`} fill="url(#spec)" />
    <path d={`M${tracePoints}`} fill="none" stroke="#e8eef0" />
    {freqs.map((f, i) => (
      <path key={f} d={`M${74.5 + i * 64.25} 19V70`} stroke="#fff" strokeOpacity=".3" />
    ))}
    <path d="M20.500 19V70.500H887" stroke="#667" fill="none" />
    {Array.from({ length: 14 }, (_, i) => (
      <text key={i} x="18" y={22 + i * 4} textAnchor="end" fontSize="7" fill="#c8c8c8">{i ? -10 * i : 0}</text>
    ))}
    {freqs.map((f, i) => (
      <text key={f} x={74 + i * 64.25} y="83" textAnchor="middle" fontSize="7" fill="#d0d0d0">{f.toFixed(3)}MHz</text>
    ))}
    <rect x="438" width="32" height="89" fill="#909090" fillOpacity=".45" />
    <path d="M454 0V89" stroke="#b01830" strokeWidth="1.500" />
  </svg>
)

const Waterfall = () => (
  <svg viewBox="0 0 907 189" role="img" aria-label="Waterfall">
    <defs>
      <linearGradient id="edge">
        <stop offset="0" stopColor="#000" />
        <stop offset="1" stopColor="#00005e" />
      </linearGradient>
      <linearGradient id="scale" x1="0" y1="0" x2="0" y2="1">
        <stop offset="0" stopColor="#5a0010" />
        <stop offset=".2" stopColor="#a00018" />
        <stop offset=".38" stopColor="#f00010" />
        <stop offset=".46" stopColor="#ff7a10" />
        <stop offset=".52" stopColor="#fff020" />
        <stop offset=".58" stopColor="#80e0b0" />
        <stop offset=".63" stopColor="#3078f0" />
        <stop offset=".7" stopColor="#0a0a90" />
        <stop offset="1" stopColor="#000" />
      </linearGradient>
    </defs>
    <rect width="907" height="189" fill="#000" />
    <rect x="14" width="8" height="189" fill="url(#edge)" />
    <rect x="20" width="867" height="189" fill="#00005e" />
    <path d={speckles(3, 1500, 12)} stroke="#000040" strokeWidth="2" strokeOpacity=".4" />
    <path d={speckles(11, 1500, 9)} stroke="#080884" strokeWidth="1.500" strokeOpacity=".4" />
    <path d={speckles(19, 350, 5)} stroke="#2020a8" strokeOpacity=".5" />
    <path d={speckles(29, 90, 4)} stroke="#4060c8" strokeOpacity=".5" />
    <rect x="441" y="120" width="24" height="3" fill="#88b8a0" />
    {hitColors.map((c, i) => (
      <rect key={i} x={442 + i * 2} y="119" width="2" height="4" fill={c} />
    ))}
    <rect x="894" y="9" width="7" height="134" fill="url(#scale)" />
  </svg>
)

const modes = ["NFM", "AM", "LSB", "USB", "WFM", "DSB", "CW-L", "CW-U"]

const Collapse = () => (
  <svg width="7" height="7"><path d="M.5.5h6v6h-6z" fill="#ddd" stroke="#999" /><path d="M2 3.500h3" stroke="#333" /></svg>
)

const RadioPanel = () => (
  <Panel>
    <PanelHeader><Collapse />Radio</PanelHeader>
    <RadioGrid>
      {modes.map(m => (
        <Label key={m}><Radio type="radio" name="mode" defaultChecked={m === "AM"} />{m}</Label>
      ))}
    </RadioGrid>
    <Form>
      <FieldRow $h={20}><span>Frequency</span><Spin label="Frequency" value="131,558,102" h={16} big /></FieldRow>
      <FieldRow $h={20}><span>Center</span><Spin label="Center" value="131,996,704" h={16} big /></FieldRow>
      <FieldRow $h={20}>
        <Label><Check type="checkbox" />Shift</Label>
        <Spin label="Shift" value="-106,000,000" h={16} big off />
      </FieldRow>
      <FieldRow $h={18}><span>Filter type</span><Select label="Filter type" value="Blackman-Harris" $w="89px" $h={14} /></FieldRow>
      <PairRow $h={11} $pad={2}><span>Filter bandwidth</span><span>Filter order</span></PairRow>
      <PairRow $h={13}><Spin label="Filter bandwidth" value="10000" h={13} /><Spin label="Filter order" value="400" h={13} /></PairRow>
      <PairRow $h={14} $pad={3}><Label><Check type="checkbox" />Squelch</Label><span>CW Shift</span></PairRow>
      <PairRow $h={13}><Spin label="Squelch" value="69" h={13} off /><Spin label="CW shift" value="600" h={13} off /></PairRow>
      <PairRow $h={14}><span /><span>Step size</span></PairRow>
      <PairRow $h={14}>
        <Label $end $gap={4}>Snap to grid<Check type="checkbox" /></Label>
        <Select label="Step size" value="1 kHz" $w="63px" $h={14} />
      </PairRow>
      <PairRow $h={17}>
        <Label $end $gap={4}>Correct IQ<Check type="checkbox" /></Label>
        <Label $end $gap={4}>Swap I &amp; Q<Check type="checkbox" /></Label>
      </PairRow>
      <PairRow $h={16}>
        <Label $end $gap={4} $off>FM Stereo<Check type="checkbox" disabled /></Label>
        <Label $end $gap={4}>Mark Peaks<Check type="checkbox" /></Label>
      </PairRow>
    </Form>
    <PanelHeader><Collapse />Audio</PanelHeader>
    <GainRow>
      <label htmlFor="af">AF Gain</label>
      <AfRange id="af" type="range" defaultValue="64" />
    </GainRow>
  </Panel>
)

const SdrApp = () => (
  <SdrWindow>
    <SdrTitle>
      <svg width="7" height="8"><path d="M0 2l4 1 3 4-4-2z" fill="#fff" stroke="#2f6cb0" /></svg>
      <TitleText>SDR# v1.0.0.1005 - IQ Imbalance: Gain = 1.000 Phase = 0.000°</TitleText>
      <CaptionButtons widths={[18, 18, 34]} height={14} />
    </SdrTitle>
    <SdrBody>
      <SdrTools>
        <SdrButton $w={32}>Stop</SdrButton>
        <Select label="Source" value="RTL-SDR / USB" $w="121px" $h={15} />
        <SdrButton $w={46}>Configure</SdrButton>
      </SdrTools>
      <SdrMain>
        <RadioPanel />
        <ScrollTrack $w={10}>
          <Arrow up />
          <ScrollThumb $h={71} $m="2px 0 auto"><Grip /></ScrollThumb>
          <Arrow />
        </ScrollTrack>
        <Scopes>
          <Spectrum />
          <Waterfall />
        </Scopes>
        <ScopeColumn>
          <SliderLabel htmlFor="zoom">Zoom</SliderLabel>
          <VRange id="zoom" type="range" defaultValue="23" />
          <SliderLabel htmlFor="contrast">Contrast</SliderLabel>
          <VRange id="contrast" type="range" defaultValue="22" />
          <SliderLabel as="span" $last>Speed</SliderLabel>
        </ScopeColumn>
      </SdrMain>
    </SdrBody>
  </SdrWindow>
)

const App = () => (
  <Desktop>
    <GlobalStyle />
    <TopRow>
      <RtlApp />
      <PlotterApp />
    </TopRow>
    <SdrApp />
  </Desktop>
)

export default App
